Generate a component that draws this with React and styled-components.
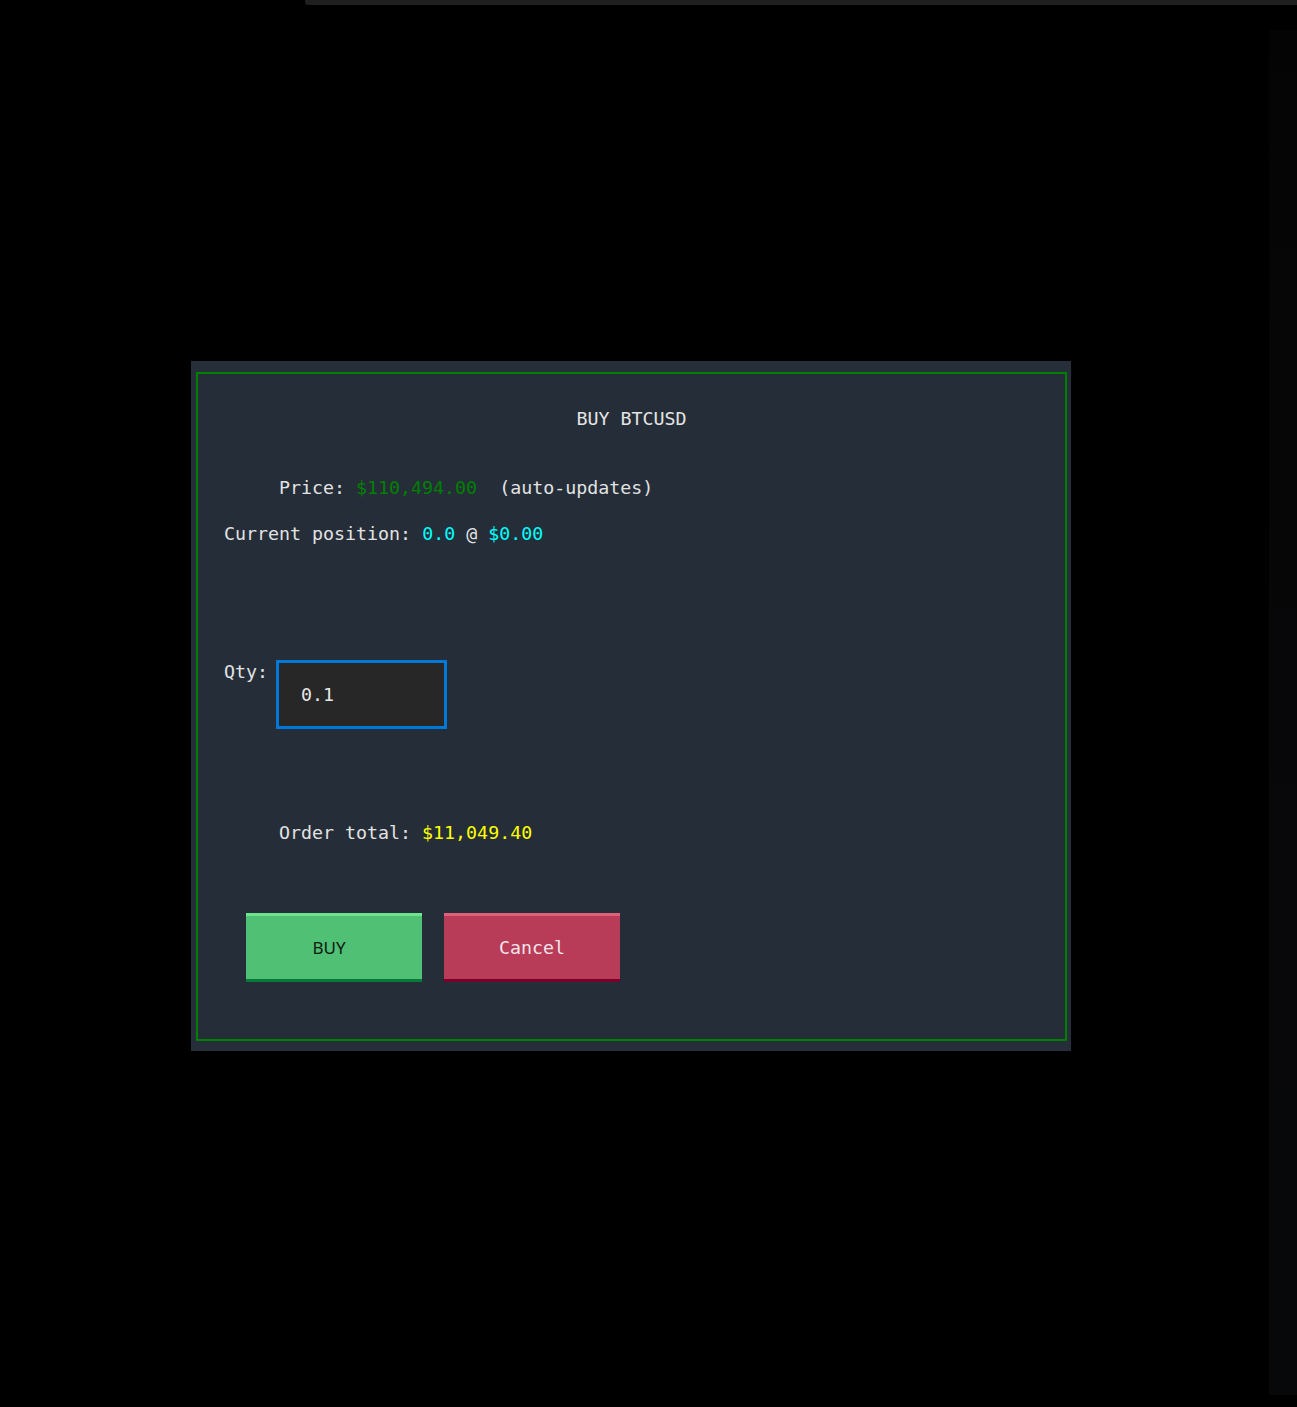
import React, { useState } from "react";
import styled, { createGlobalStyle } from "styled-components";

const GlobalStyle = createGlobalStyle`
  html, body {
    margin: 0;
    padding: 0;
    background: #000;
  }
  * {
    box-sizing: border-box;
  }
`;

const Page = styled.div`
  width: 1297px;
  height: 1407px;
  background: #000;
  display: flex;
  flex-direction: column;
  overflow: hidden;
`;

const TopStrip = styled.div`
  height: 5px;
  margin-left: 305px;
  background: #1f1f1f;
  border-bottom-left-radius: 3px;
`;

const Desk = styled.div`
  flex: 1;
  display: flex;
`;

const Main = styled.main`
  flex: 1;
  padding: 356px 0 0 191px;
`;

const SideShade = styled.div`
  width: 28px;
  margin: 25px 0 12px;
  background: linear-gradient(#040404, #08080a 60%, #07080a);
`;

const Frame = styled.div`
  width: 880px;
  height: 690px;
  background: #262f39;
  padding: 11px 4px 10px 5px;
`;

const Dialog = styled.section`
  height: 100%;
  border: 2px solid #008000;
  background: #252e38;
  display: flex;
  flex-direction: column;
  padding-left: 26px;
  font-family: "DejaVu Sans Mono", "Liberation Mono", monospace;
  font-size: 18.3px;
  line-height: 22px;
  color: #e2e2e2;
`;

const Title = styled.h2`
  margin: 34px 0 0 -26px;
  font: inherit;
  text-align: center;
  color: #e4e4e4;
`;

const Line = styled.div`
  margin-top: ${(p) => p.$gap}px;
  padding-left: ${(p) => (p.$indent ? 55 : 0)}px;
  white-space: pre;
`;

const Value = styled.span`
  color: ${(p) => p.$color};
`;

const QtyRow = styled.div`
  margin-top: 115px;
  display: flex;
  align-items: flex-start;
  gap: 8px;
`;

const QtyLabel = styled.span`
  margin-top: 1px;
`;

const QtyInput = styled.input`
  width: 171px;
  height: 69px;
  border: 3px solid #0078d7;
  background: #272727;
  color: #e6e6e6;
  font: inherit;
  padding: 0 0 0 22px;
  outline: none;
`;

const Buttons = styled.div`
  margin: 69px 0 0 22px;
  display: flex;
  gap: 22px;
`;

const ActionButton = styled.button`
  width: 176px;
  height: 69px;
  border: none;
  border-top: 3px solid ${(p) => p.$top};
  border-bottom: 3px solid ${(p) => p.$bottom};
  background: ${(p) => p.$bg};
  color: ${(p) => p.$fg};
  font-family: ${(p) =>
    p.$sans ? `"Noto Sans", "Open Sans", sans-serif` : "inherit"};
  font-size: ${(p) => (p.$sans ? "17px" : "inherit")};
  padding: 0 ${(p) => (p.$sans ? "10px" : "0")} 0 0;
  cursor: pointer;
`;

export default function App() {
  const [qty, setQty] = useState("0.1");
  const price = 110494;
  const total = (parseFloat(qty) || 0) * price;
  const fmt = (n) =>
    "$" +
    n.toLocaleString("en-US", {
      minimumFractionDigits: 2,
      maximumFractionDigits: 2,
    });

  return (
    <>
      <GlobalStyle />
      <Page>
        <TopStrip />
        <Desk>
          <Main>
            <Frame>
              <Dialog>
                <Title>BUY BTCUSD</Title>
                <Line $gap={47} $indent>
                  Price: <Value $color="#008000">{fmt(price)}</Value>
                  {"  (auto-updates)"}
                </Line>
                <Line $gap={24}>
                  Current position: <Value $color="#00ffff">0.0</Value> @{" "}
                  <Value $color="#00ffff">$0.00</Value>
                </Line>
                <QtyRow>
                  <QtyLabel>Qty:</QtyLabel>
                  <QtyInput
                    value={qty}
                    onChange={(e) => setQty(e.target.value)}
                  />
                </QtyRow>
                <Line $gap={93} $indent>
                  Order total: <Value $color="#ffff00">{fmt(total)}</Value>
                </Line>
                <Buttons>
                  <ActionButton
                    $sans
                    $bg="#50c075"
                    $top="#6fe48f"
                    $bottom="#077a38"
                    $fg="#0e1a12"
                  >
                    BUY
                  </ActionButton>
                  <ActionButton
                    $bg="#b83c58"
                    $top="#e0607a"
                    $bottom="#78002a"
                    $fg="#f2e4ea"
                  >
                    Cancel
                  </ActionButton>
                </Buttons>
              </Dialog>
            </Frame>
          </Main>
          <SideShade />
        </Desk>
      </Page>
    </>
  );
}
